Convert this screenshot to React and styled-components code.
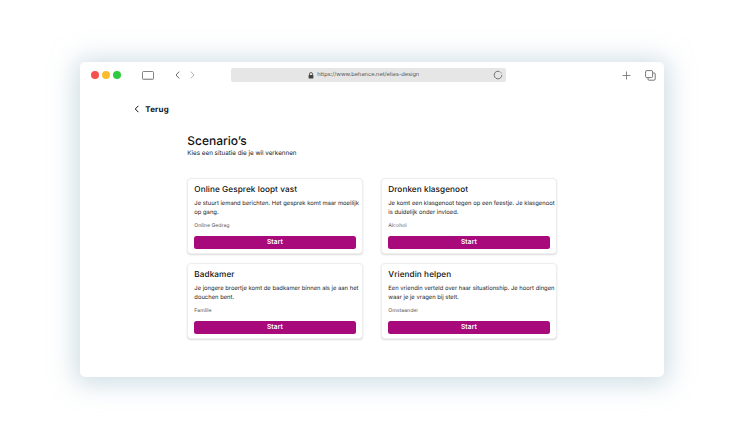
import React from "react";
import styled, { createGlobalStyle } from "styled-components";

const Global = createGlobalStyle`
  html, body { margin: 0; padding: 0; background: #fff; }
  body { width: 745px; height: 438px; overflow: hidden; font-family: Inter, "Liberation Sans", sans-serif; text-rendering: geometricPrecision; }
`;
const Stage = styled.div`
  width: 745px; height: 438px; box-sizing: border-box;
  padding: 62px 81px 61px 80px;
`;
const Win = styled.div`
  height: 315px; background: #fff; border-radius: 5px;
  box-shadow: 0 2px 24px 5px rgba(160, 190, 205, 0.5);
  display: flex; flex-direction: column;
`;
const Toolbar = styled.div`
  height: 26px; flex: none; display: flex; align-items: center;
  padding: 0 8px 0 11px; position: relative;
`;
const Dots = styled.div`display: flex; gap: 3px; margin-right: 21px;`;
const Dot = styled.span`width: 8px; height: 8px; border-radius: 50%; background: ${p => p.$c};`;
const Icon = styled.svg`flex: none; display: block; margin-right: ${p => p.$mr || 0}px;`;
const UrlBar = styled.div`
  width: 275px; height: 14px; margin-left: 36px; background: #e6e6e6; border-radius: 2px;
  position: relative; display: flex; align-items: center; justify-content: center;
  box-sizing: border-box; gap: 3.5px; padding-right: 10px;
`;
const UrlText = styled.span`font-size: 5.65px; color: #555; font-family: Inter, sans-serif;`;
const Reload = styled.svg`position: absolute; right: 3px; top: 2px;`;
const Actions = styled.div`margin-left: auto; display: flex; align-items: center; gap: 14px;`;
const Body = styled.div`flex: 1; padding: 0 0 0 107.3px; display: flex; flex-direction: column;`;
const Back = styled.div`
  display: flex; align-items: center; gap: 5px; margin: 14px 0 0 -53px; height: 14px;
  font: 700 7.9px Inter, sans-serif; color: #111; letter-spacing: 0.03em;
`;
const Title = styled.h1`margin: 17px 0 0; font: 500 12px/15px Inter, sans-serif; color: #111;`;
const Sub = styled.p`margin: 1px 0 0; font: 400 6.27px/9px Inter, sans-serif; color: #222;`;
const Grid = styled.div`
  display: grid; grid-template-columns: 175.4px 175.4px; column-gap: 18.6px; row-gap: 9px; margin-top: 20px;
`;
const Card = styled.div`
  height: 76px; box-sizing: border-box; padding: 4px 6px 4.5px 6px; border: 1px solid #eee; border-radius: 4px;
  background: #fff; box-shadow: 0 1px 2px rgba(0,0,0,.14);
  display: flex; flex-direction: column;
`;
const CardTitle = styled.h2`margin: 0; font: 500 8.2px/12px Inter, sans-serif; color: #111; letter-spacing: 0.01em; white-space: nowrap;`;
const Text = styled.p`margin: 4px 0 0; height: 18px; font: 400 5.85px/9px Inter, sans-serif; color: #222; white-space: pre;`;
const Tag = styled.span`margin-top: 5px; font: 400 5.2px/8px Inter, sans-serif; color: #555;`;
const Btn = styled.button`
  margin-top: auto; height: 13px; border: 0; padding: 0; border-radius: 2.5px; background: #a80a7c;
  color: #fff; font: 600 6.6px/13px Inter, sans-serif; letter-spacing: .02em;
`;

const data = [
  ["Online Gesprek loopt vast", "Je stuurt iemand berichten. Het gesprek komt maar moeilijk\nop gang.", "Online Gedrag"],
  ["Dronken klasgenoot", "Je komt een klasgenoot tegen op een feestje. Je klasgenoot\nis duidelijk onder invloed.", "Alcohol"],
  ["Badkamer", "Je jongere broertje komt de badkamer binnen als je aan het\ndouchen bent.", "Familie"],
  ["Vriendin helpen", "Een vriendin verteld over haar situationship. Je hoort dingen\nwaar je je vragen bij stelt.", "Omstaander"],
];

export default function App() {
  return (
    <Stage>
      <Global />
      <Win>
        <Toolbar>
          <Dots><Dot $c="#f4514f" /><Dot $c="#fdbb2e" /><Dot $c="#2fcb3e" /></Dots>
          <Icon $mr={21} width="12" height="9" viewBox="0 0 12 9" fill="none">
            <rect x=".5" y=".5" width="11" height="8" rx="1" stroke="#666" strokeWidth=".8" />
            <path d="M1 8h10" stroke="#aaa" strokeWidth="1" />
          </Icon>
          <Icon $mr={10} width="5" height="8" viewBox="0 0 5 8" fill="none"><path d="M4.2.6 1 4l3.2 3.4" stroke="#555" strokeWidth=".9" /></Icon>
          <Icon width="5" height="8" viewBox="0 0 5 8" fill="none"><path d="M.8.6 4 4 .8 7.4" stroke="#aaa" strokeWidth=".9" /></Icon>
          <UrlBar>
            <svg width="6" height="7" viewBox="0 0 6 7"><path d="M1.5 3V2a1.5 1.5 0 0 1 3 0v1" fill="none" stroke="#444" strokeWidth=".8" /><rect x=".6" y="3" width="4.8" height="3.6" rx=".5" fill="#444" /></svg>
            <UrlText>https://www.behance.net/elias-design</UrlText>
            <Reload width="10" height="10" viewBox="0 0 10 10" fill="none"><path d="M6.6 1.6A3.8 3.8 0 1 0 8.8 5" stroke="#555" strokeWidth=".8" /><path d="M7.4 1.9 8.9 3.6" stroke="#666" strokeWidth=".6" /></Reload>
          </UrlBar>
          <Actions>
            <svg width="9" height="9" viewBox="0 0 9 9"><path d="M4.5.5v8M.5 4.5h8" stroke="#777" strokeWidth=".9" /></svg>
            <svg width="11" height="11" viewBox="0 0 11 11" fill="none"><rect x=".6" y=".6" width="7" height="7" rx="1.2" stroke="#555" strokeWidth=".8" /><path d="M8.2 3h1a1 1 0 0 1 1 1v5a1.2 1.2 0 0 1-1.2 1.2H4a1 1 0 0 1-1-1V8" stroke="#555" strokeWidth=".8" /></svg>
          </Actions>
        </Toolbar>
        <Body>
          <Back>
            <svg width="6" height="8" viewBox="0 0 6 8" fill="none"><path d="M4.4.8 1.3 4l3.1 3.2" stroke="#111" strokeWidth="1" /></svg>
            Terug
          </Back>
          <Title>Scenario’s</Title>
          <Sub>Kies een situatie die je wil verkennen</Sub>
          <Grid>
            {data.map(([t, d, g]) => (
              <Card key={t}>
                <CardTitle>{t}</CardTitle>
                <Text>{d}</Text>
                <Tag>{g}</Tag>
                <Btn>Start</Btn>
              </Card>
            ))}
          </Grid>
        </Body>
      </Win>
    </Stage>
  );
}
